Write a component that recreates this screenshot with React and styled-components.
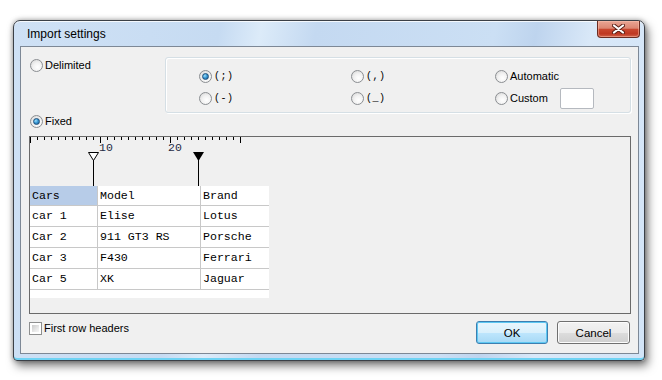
import React from "react";
import styled, { createGlobalStyle } from "styled-components";

const GlobalStyle = createGlobalStyle`
  html, body {
    margin: 0;
    padding: 0;
    background: #ffffff;
  }
  body {
    font-family: "Liberation Sans", Arial, sans-serif;
    color: #000;
  }
`;

const Desktop = styled.div`
  width: 662px;
  height: 380px;
  padding: 20px 0 0 13px;
  box-sizing: border-box;
`;

const Window = styled.div`
  width: 632px;
  height: 341px;
  box-sizing: border-box;
  border: 1px solid #3b4047;
  border-radius: 7px 7px 4px 4px;
  padding: 0 5px 6px 6px;
  display: flex;
  flex-direction: column;
  background: linear-gradient(100deg, #cfe1f5 0%, #c6dbf2 30%, #dcebf9 36%, #c4d9f1 44%, #cbdff4 70%, #bed4ee 76%, #d9e8f8 84%, #d2e4f7 100%);
  box-shadow: inset 0 -2px 0 #6fd3f4, inset 0 1px 0 rgba(255, 255, 255, 0.8), 3px 5px 10px rgba(0, 0, 0, 0.5), 0 0 5px rgba(0, 0, 0, 0.35);
`;

const TitleBar = styled.div`
  height: 25px;
  display: flex;
  align-items: flex-start;
  justify-content: space-between;
`;

const Title = styled.span`
  font-size: 12px;
  line-height: 27px;
  padding-left: 7px;
  color: #000;
`;

const CloseButton = styled.div`
  width: 43px;
  height: 17px;
  margin-right: -1px;
  box-sizing: border-box;
  border: 1px solid #6b2c22;
  border-top: none;
  border-radius: 0 0 4px 4px;
  display: flex;
  align-items: center;
  justify-content: center;
  background: linear-gradient(#e9a594 0%, #dc8672 45%, #c9472f 52%, #bf3822 80%, #d2644c 100%);
  box-shadow: inset 0 0 0 1px rgba(255, 200, 180, 0.45);
`;

const Client = styled.div`
  flex: 1;
  border: 1px solid #7d8896;
  background: #f0f0f0;
  padding: 10px 7px 9px 8px;
  display: flex;
  flex-direction: column;
  font-size: 11px;
`;

const TopRow = styled.div`
  display: grid;
  grid-template-columns: 136px 1fr;
  align-items: start;
`;

const Choice = styled.label`
  display: flex;
  align-items: center;
  gap: 2px;
  height: ${(p) => p.$h || 13}px;
  margin: ${(p) => p.$m || "0"};
  white-space: nowrap;
  line-height: 13px;
`;

const RadioDot = styled.span`
  width: 13px;
  height: 13px;
  flex: none;
  box-sizing: border-box;
  border-radius: 50%;
  border: 1px solid #8b8e92;
  background: radial-gradient(circle at 60% 65%, #ffffff 0%, #f2f2f2 45%, #d2d2d2 100%);
  display: flex;
  align-items: center;
  justify-content: center;

  &::after {
    content: "";
    display: ${(p) => (p.$checked ? "block" : "none")};
    width: 7px;
    height: 7px;
    box-sizing: border-box;
    border-radius: 50%;
    border: 1px solid #1e4f7a;
    background: radial-gradient(circle at 35% 35%, #9fe0fb 0%, #3a9ad6 45%, #16568c 100%);
  }
`;

const GroupBox = styled.div`
  height: 56px;
  box-sizing: border-box;
  border: 1px solid #d5dfe5;
  border-radius: 3px;
  box-shadow: inset 1px 1px 0 #ffffff, 1px 1px 0 #ffffff;
  padding: 8px 0 0 33px;
  display: grid;
  grid-template-columns: 152px 144px 1fr;
  grid-auto-rows: 20px;
  row-gap: 2px;
  align-items: center;
`;

const Mono = styled.span`
  font-family: "Liberation Mono", "Courier New", monospace;
  font-size: 10px;
  letter-spacing: 0.5px;
`;

const TextBox = styled.span`
  width: 34px;
  height: 21px;
  box-sizing: border-box;
  margin-left: 10px;
  background: #fff;
  border: 1px solid #b5b9bf;
  border-radius: 2px;
`;

const Preview = styled.div`
  flex: 1;
  margin-top: 8px;
  border: 1px solid #6a6a6a;
  background: #f0f0f0;
  display: flex;
  flex-direction: column;
  align-items: flex-start;
`;

const Ruler = styled.svg`
  display: block;
`;

const Table = styled.div`
  display: grid;
  grid-template-columns: 68px 103px 68px;
  background: #fff;
  padding-bottom: 8px;
  font-family: "Liberation Mono", "Courier New", monospace;
  font-size: 11.6px;
`;

const Cell = styled.div`
  height: ${(p) => (p.$head ? 20 : 21)}px;
  box-sizing: border-box;
  padding-left: 2px;
  line-height: ${(p) => (p.$head ? 19 : 20)}px;
  border-bottom: 1px solid #c8c8c8;
  border-right: ${(p) => (p.$last ? "none" : "1px solid #c8c8c8")};
  background: ${(p) => (p.$selected ? "#b7cce8" : "#ffffff")};
  color: #000;
  white-space: pre;
`;

const Footer = styled.div`
  margin-top: 7px;
  display: flex;
  align-items: flex-start;
  justify-content: space-between;
`;

const CheckBox = styled.span`
  width: 13px;
  height: 13px;
  flex: none;
  box-sizing: border-box;
  border: 1px solid #8e8f8f;
  background: #fff;
  padding: 2px;

  &::after {
    content: "";
    display: block;
    width: 100%;
    height: 100%;
    background: linear-gradient(135deg, #cbcbcb 0%, #ececec 70%, #f6f6f6 100%);
  }
`;

const Buttons = styled.div`
  display: flex;
  gap: 9px;
  margin-right: 1px;
`;

const Button = styled.div`
  width: ${(p) => p.$w}px;
  height: 23px;
  box-sizing: border-box;
  border-radius: 3px;
  border: 1px solid ${(p) => (p.$default ? "#3c7fb1" : "#707070")};
  display: flex;
  align-items: center;
  justify-content: center;
  font-size: 11.5px;
  background: ${(p) =>
    p.$default
      ? "linear-gradient(#eaf6fd 0%, #d9f0fc 50%, #bee6fd 51%, #a7d9f5 100%)"
      : "linear-gradient(#f2f2f2 0%, #ebebeb 50%, #dddddd 51%, #cfcfcf 100%)"};
  box-shadow: inset 0 0 0 1px ${(p) => (p.$default ? "#5ec8f2" : "#fcfcfc")};
`;

const rows = [
  ["car 1", "Elise", "Lotus"],
  ["Car 2", "911 GT3 RS", "Porsche"],
  ["Car 3", "F430", "Ferrari"],
  ["Car 5", "XK", "Jaguar"],
];

const Radio = ({ checked, children, h, m }) => (
  <Choice $h={h} $m={m}>
    <RadioDot $checked={checked} />
    {children}
  </Choice>
);

const RulerDrawing = () => {
  const ticks = [];
  for (let i = 0; i <= 30; i++) {
    const x = i * 7 + 0.5;
    const major = i % 10 === 0;
    ticks.push(<line key={i} x1={x} y1={0} x2={x} y2={major ? 6 : 3} stroke="#000" strokeWidth="1" />);
  }
  return (
    <Ruler width="242" height="49" viewBox="0 0 242 49">
      {ticks}
      <text x="69" y="14" fontFamily="Liberation Mono, monospace" fontSize="11.5" fill="#1f2b44">10</text>
      <text x="138" y="14" fontFamily="Liberation Mono, monospace" fontSize="11.5" fill="#1f2b44">20</text>
      <polygon points="58.5,15.5 68.5,15.5 63.5,23.5" fill="#fff" stroke="#000" strokeWidth="1" />
      <line x1="63.5" y1="23" x2="63.5" y2="49" stroke="#000" strokeWidth="1" />
      <polygon points="163,15 174,15 168.5,24" fill="#000" />
      <line x1="168.5" y1="23" x2="168.5" y2="49" stroke="#000" strokeWidth="1" />
    </Ruler>
  );
};

const App = () => {
  return (
    <Desktop>
      <GlobalStyle />
      <Window>
        <TitleBar>
          <Title>Import settings</Title>
          <CloseButton>
            <svg width="13" height="10" viewBox="0 0 13 10">
              <path d="M2 1.5 L11 8.5 M11 1.5 L2 8.5" stroke="#5a1d14" strokeWidth="4" strokeLinecap="round" />
              <path d="M2 1.5 L11 8.5 M11 1.5 L2 8.5" stroke="#ffffff" strokeWidth="2.2" strokeLinecap="round" />
            </svg>
          </CloseButton>
        </TitleBar>
        <Client>
          <TopRow>
            <Radio m="2px 0 0 1px">Delimited</Radio>
            <GroupBox>
              <Radio checked><Mono>(;)</Mono></Radio>
              <Radio><Mono>(,)</Mono></Radio>
              <Radio>Automatic</Radio>
              <Radio><Mono>(-)</Mono></Radio>
              <Radio><Mono>(_)</Mono></Radio>
              <Radio h={20}>
                Custom
                <TextBox />
              </Radio>
            </GroupBox>
          </TopRow>
          <Radio checked m="2px 0 0 1px">Fixed</Radio>
          <Preview>
            <RulerDrawing />
            <Table>
              <Cell $head $selected>Cars</Cell>
              <Cell $head>Model</Cell>
              <Cell $head $last>Brand</Cell>
              {rows.map((r) => (
                <React.Fragment key={r[0]}>
                  <Cell>{r[0]}</Cell>
                  <Cell>{r[1]}</Cell>
                  <Cell $last>{r[2]}</Cell>
                </React.Fragment>
              ))}
            </Table>
          </Preview>
          <Footer>
            <Choice $m="1px 0 0 0">
              <CheckBox />
              First row headers
            </Choice>
            <Buttons>
              <Button $default $w={72}>OK</Button>
              <Button $w={73}>Cancel</Button>
            </Buttons>
          </Footer>
        </Client>
      </Window>
    </Desktop>
  );
};

export default App;
